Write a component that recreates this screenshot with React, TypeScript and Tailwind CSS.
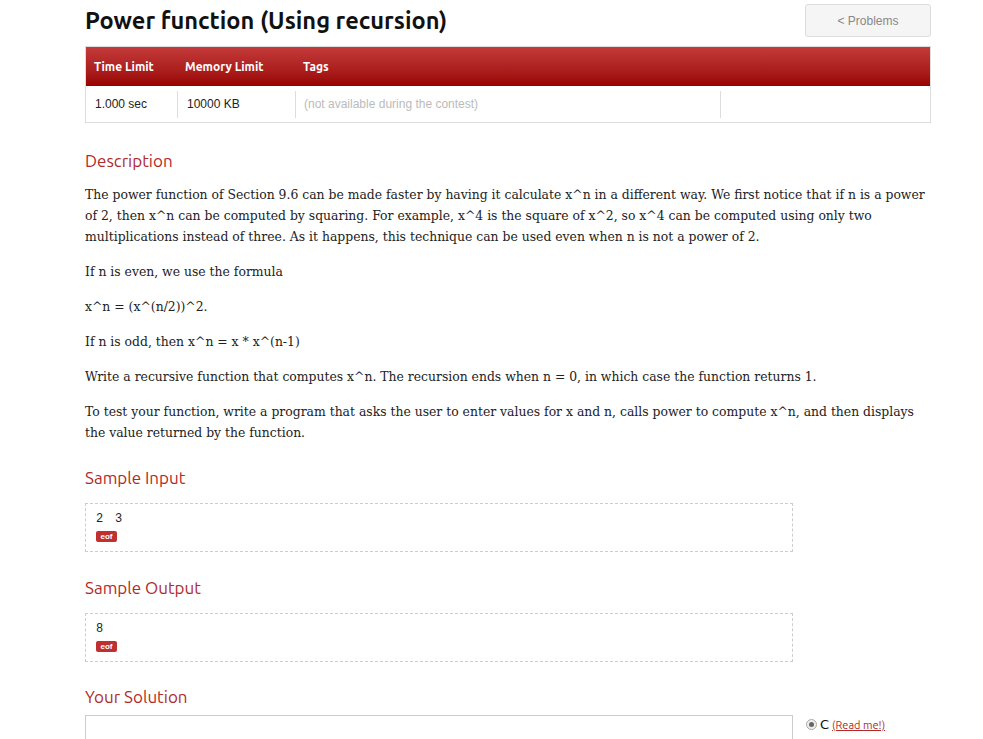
const HEAD = "font-['Ubuntu','Noto_Sans','Open_Sans',sans-serif]";

function SectionTitle({ children }: { children: string }) {
  return <h2 className={`${HEAD} text-[17px] leading-[22px] text-[#b02a2a]`}>{children}</h2>;
}

function SampleBox({ text }: { text: string }) {
  return (
    <div className="w-[708px] border border-dashed border-[#cccccc] px-[10px] pt-[8px] pb-[9px]">
      <pre className="font-['Liberation_Mono',monospace] text-[12px] leading-[14px] tracking-[-0.9px] text-[#222]">{text}</pre>
      <span className="mt-[5px] block h-[11px] w-[21px] rounded-[2px] bg-[#c0302e] text-center font-['Liberation_Sans',sans-serif] text-[8px] font-bold leading-[11px] text-white">
        eof
      </span>
    </div>
  );
}

export default function App() {
  return (
    <div className="h-[739px] overflow-hidden bg-white font-['Liberation_Sans',Arial,sans-serif]">
      <div className="ml-[85px] w-[846px]">
        <div className="flex items-start justify-between pt-[4px]">
          <h1 className={`${HEAD} pt-[1px] text-[23.6px] font-bold leading-[30px] text-[#111]`}>
            Power function (Using recursion)
          </h1>
          <button className="h-[33px] w-[126px] rounded-[3px] border border-[#dcdcdc] bg-[#f5f5f5] text-[12px] text-[#888]">
            &lt; Problems
          </button>
        </div>

        <div className="mt-[9px] border border-[#dddddd]">
          <div className="flex h-[39px] items-center bg-gradient-to-b from-[#c53a3a] to-[#980000] text-[12px] font-bold text-white">
            <div className={`${HEAD} w-[91px] pl-[8px]`}>Time Limit</div>
            <div className={`${HEAD} w-[118px] pl-[8px]`}>Memory Limit</div>
            <div className={`${HEAD} pl-[8px]`}>Tags</div>
          </div>
          <div className="flex h-[36px] items-center text-[12px] text-[#222]">
            <div className="w-[91px] pl-[9px]">1.000 sec</div>
            <div className="flex h-[27px] w-[118px] items-center border-l border-[#dddddd] pl-[9px]">10000 KB</div>
            <div className="flex h-[27px] w-[425px] items-center border-l border-[#dddddd] pl-[8px] text-[#bbbbbb]">
              (not available during the contest)
            </div>
            <div className="h-[27px] border-l border-[#dddddd]" />
          </div>
        </div>

        <div className="mt-[27px]">
          <SectionTitle>Description</SectionTitle>
        </div>
        <div className="mt-[12px] space-y-[14px] font-['DejaVu_Serif',Georgia,serif] text-[12.4px] leading-[21px] text-[#222]">
          <p>
            The power function of Section 9.6 can be made faster by having it calculate x^n in a different way. We first notice
            that if n is a power of 2, then x^n can be computed by squaring. For example, x^4 is the square of x^2, so x^4 can be
            computed using only two multiplications instead of three. As it happens, this technique can be used even when n is not
            a power of 2.
          </p>
          <p>If n is even, we use the formula</p>
          <p>x^n = (x^(n/2))^2.</p>
          <p>If n is odd, then x^n = x * x^(n-1)</p>
          <p>Write a recursive function that computes x^n. The recursion ends when n = 0, in which case the function returns 1.</p>
          <p>
            To test your function, write a program that asks the user to enter values for x and n, calls power to compute x^n, and
            then displays the value returned by the function.
          </p>
        </div>

        <div className="mt-[24px]">
          <SectionTitle>Sample Input</SectionTitle>
        </div>
        <div className="mt-[14px]">
          <SampleBox text="2  3" />
        </div>

        <div className="mt-[25px]">
          <SectionTitle>Sample Output</SectionTitle>
        </div>
        <div className="mt-[14px]">
          <SampleBox text="8" />
        </div>

        <div className="mt-[24px]">
          <SectionTitle>Your Solution</SectionTitle>
        </div>
        <div className="mt-[7px] flex items-start">
          <div className="h-[120px] w-[708px] border border-[#cccccc]" />
          <label className="ml-[13px] flex items-center gap-[3px]">
            <span className="flex h-[11px] w-[11px] items-center justify-center rounded-full border border-[#aaa] bg-[#eee]">
              <span className="h-[5px] w-[5px] rounded-full bg-[#666]" />
            </span>
            <span className="font-['DejaVu_Sans',sans-serif] text-[13px] text-[#111]">C</span>
            <a className={`${HEAD} text-[11px] text-[#b02a2a] underline`}>(Read me!)</a>
          </label>
        </div>
      </div>
    </div>
  );
}
